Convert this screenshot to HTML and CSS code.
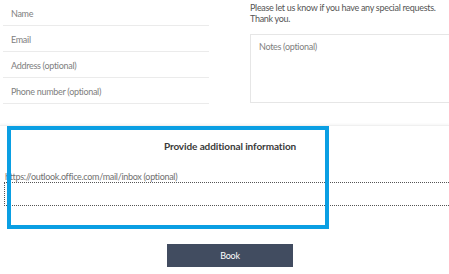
FILE: index.html
```
<!DOCTYPE html>
<html lang="en">
<head>
  <meta charset="UTF-8">
  <title>Booking</title>
  <link rel="stylesheet" href="styles.css">
</head>
<body>

  <!-- Contact + notes -->
  <div class="top">
    <div class="fields">
      <div class="field">Name</div>
      <div class="field">Email</div>
      <div class="field">Address (optional)</div>
      <div class="field">Phone number (optional)</div>
    </div>
    <div class="notes-col">
      <p class="notes-intro">Please let us know if you have any special requests.<br>Thank you.</p>
      <div class="notes">Notes (optional)</div>
    </div>
  </div>

  <!-- Additional information -->
  <section class="extra">
    <h2>Provide additional information</h2>
    <div class="extra-label">https://outlook.office.com/mail/inbox (optional)</div>
    <div class="extra-input"></div>
    <div class="highlight"></div>
  </section>

  <div class="actions">
    <button class="book">Book</button>
  </div>

</body>
</html>
```

FILE: styles.css
```
body {
  margin: 0;
  font-family: 'Lato', 'Open Sans', sans-serif;
  font-size: 9px;
  letter-spacing: -0.3px;
  background: #fff;
  color: #444;
  overflow: hidden;
}

.top {
  display: flex;
  height: 125px;
}

.fields {
  width: 206px;
  margin-left: 3px;
}

.field {
  height: 25px;
  border-bottom: 1px solid #ebebeb;
  padding-left: 8px;
  line-height: 27px;
  color: #808080;
}

.notes-col {
  margin-left: 41px;
  flex: 1;
}

.notes-intro {
  margin: 2px 0 0;
  line-height: 11px;
  color: #555;
}

.notes {
  margin-top: 10px;
  height: 55px;
  margin-right: -10px;
  border: 1px solid #e6e6e6;
  padding: 6px 8px;
  color: #808080;
}

/* Additional information */
.extra {
  position: relative;
  border-top: 1px solid #f0f0f0;
  box-shadow: 0 -1px 2px rgba(0, 0, 0, 0.04);
  height: 110px;
}

.extra h2 {
  margin: 14px 0 0;
  padding-left: 11px;
  text-align: center;
  font-size: 10px;
  letter-spacing: -0.1px;
  font-weight: 700;
  color: #3a3a3a;
}

.extra-label {
  margin: 19px 0 0 5px;
  color: #707070;
}

.extra-input {
  margin: 0 0 0 4px;
  height: 22px;
  border: 1px dotted #555;
  border-right: none;
}

.highlight {
  position: absolute;
  left: 7px;
  top: 0;
  width: 314px;
  height: 95px;
  border: 4px solid #0a9fe3;
}

.actions {
  display: flex;
  justify-content: center;
  padding-left: 11px;
  margin-top: 8px;
}

.book {
  width: 126px;
  height: 23px;
  border: none;
  background: #414c60;
  color: #fff;
  font-family: inherit;
  font-size: 9px;
  letter-spacing: -0.2px;
}
```
